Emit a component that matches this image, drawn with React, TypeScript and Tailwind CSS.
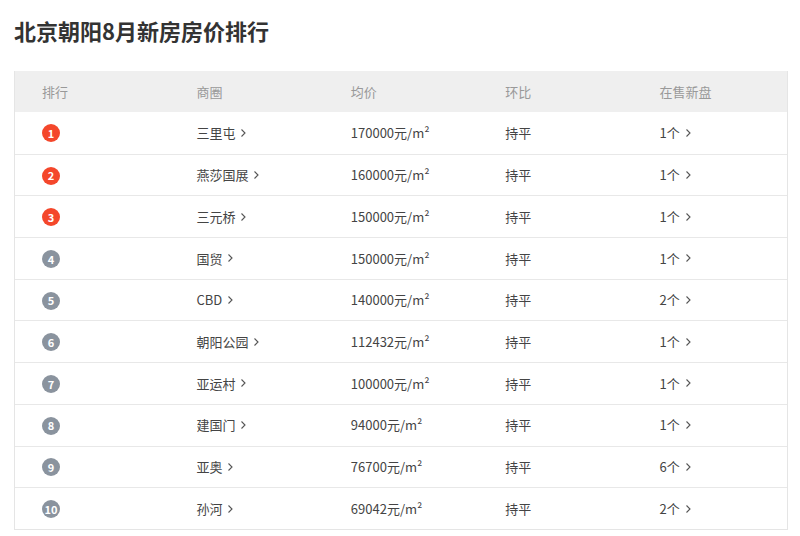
const rows = [
  ["三里屯", "170000", "1"],
  ["燕莎国展", "160000", "1"],
  ["三元桥", "150000", "1"],
  ["国贸", "150000", "1"],
  ["CBD", "140000", "2"],
  ["朝阳公园", "112432", "1"],
  ["亚运村", "100000", "1"],
  ["建国门", "94000", "1"],
  ["亚奥", "76700", "6"],
  ["孙河", "69042", "2"],
];

const Chev = () => (
  <svg width="7" height="10" viewBox="0 0 7 10" className="ml-[5px] inline-block">
    <path d="M1.5 1.5 L5 5 L1.5 8.5" fill="none" stroke="#555" strokeWidth="1.1" />
  </svg>
);

export default function App() {
  return (
    <div className="w-[800px] h-[536px] bg-white text-[#444] px-[14px]" style={{ fontFamily: '"Microsoft YaHei", "Noto Sans CJK SC", sans-serif' }}>
      <h1 className="text-[22px] font-bold leading-none pt-[19px] h-[71px] text-[#333]">北京朝阳8月新房房价排行</h1>
      <div className="w-[774px] border border-[#e5e5e5] border-t-0">
        <div className="grid grid-cols-5 h-[41px] items-center bg-[#efefef] text-[13px] text-[#999]">
          {["排行", "商圈", "均价", "环比", "在售新盘"].map((h) => (
            <div key={h} className="pl-[27px]">{h}</div>
          ))}
        </div>
        {rows.map(([name, price, n], i) => (
          <div key={i} className={`grid grid-cols-5 h-[41.7px] items-center text-[13px] ${i > 0 ? "border-t border-[#e8e8e8]" : ""}`}>
            <div className="pl-[27px]">
              <span className={`inline-flex w-[18px] h-[18px] rounded-full items-center justify-center text-white text-[11px] font-bold ${i < 3 ? "bg-[#f4472b]" : "bg-[#8a939e]"}`}>{i + 1}</span>
            </div>
            <div className="pl-[27px] flex items-center">{name}<Chev /></div>
            <div className="pl-[27px]">{price}元/m²</div>
            <div className="pl-[27px]">持平</div>
            <div className="pl-[27px] flex items-center">{n}个<Chev /></div>
          </div>
        ))}
      </div>
    </div>
  );
}
